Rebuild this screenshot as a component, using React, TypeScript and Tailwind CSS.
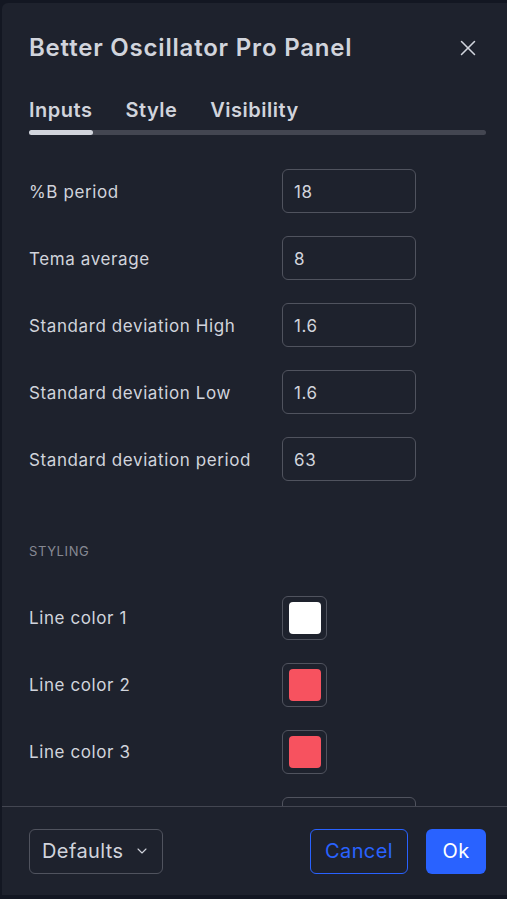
import { X, ChevronDown } from "lucide-react";

const inputs = [
  ["%B period", "18"],
  ["Tema average", "8"],
  ["Standard deviation High", "1.6"],
  ["Standard deviation Low", "1.6"],
  ["Standard deviation period", "63"],
];

const colors = [
  ["Line color 1", "bg-white"],
  ["Line color 2", "bg-[#f7525f]"],
  ["Line color 3", "bg-[#f7525f]"],
];

export default function App() {
  return (
    <div className="h-[899px] w-[507px] overflow-hidden bg-[#131722] pl-[2px] pt-[3px] font-['Inter','Noto_Sans',sans-serif] text-[#d1d4dc]">
      <div className="flex h-[892px] w-[520px] flex-col rounded-tl-md bg-[#1e222d]">
        <div className="flex h-[88px] items-center justify-between pl-[27px] pr-[41px] pt-[2px]">
          <h1 className="text-[24px] font-semibold tracking-[0.8px]">Better Oscillator Pro Panel</h1>
          <X className="h-[26px] w-[26px]" strokeWidth={1.4} />
        </div>

        <div className="pl-[27px] pr-[34px]">
          <div className="mt-[7px] flex gap-[33px] text-[20px] leading-[24px] font-semibold tracking-[0.5px]">
            <span>Inputs</span>
            <span>Style</span>
            <span>Visibility</span>
          </div>
          <div className="mt-[8px] h-[5px] w-[457px] rounded-full bg-[#434651]">
            <div className="h-[5px] w-[64px] rounded-full bg-[#d1d4dc]" />
          </div>
        </div>

        <div className="flex-1 overflow-hidden pl-[27px] pt-[34px]">
          <div className="flex flex-col gap-[23px]">
            {inputs.map(([label, value]) => (
              <div key={label} className="flex items-center">
                <span className="w-[253px] pt-[4px] text-[17px] tracking-[0.6px]">{label}</span>
                <div className="flex h-[44px] w-[134px] items-center rounded-md border border-[#50535e] px-[11px] pt-[3px] text-[17px] tracking-[0.6px]">
                  {value}
                </div>
              </div>
            ))}
          </div>

          <p className="mt-[61px] text-[13px] tracking-[0.6px] text-[#868993]">STYLING</p>

          <div className="mt-[34px] flex flex-col gap-[23px]">
            {colors.map(([label, swatch]) => (
              <div key={label} className="flex items-center">
                <span className="w-[253px] pt-[3px] text-[17px] tracking-[0.6px]">{label}</span>
                <div className="flex h-[44px] w-[45px] items-center justify-center rounded-md border border-[#50535e]">
                  <div className={`h-[32px] w-[32px] rounded-[4px] ${swatch}`} />
                </div>
              </div>
            ))}
            <div className="flex items-center">
              <span className="w-[253px]" />
              <div className="h-[44px] w-[134px] rounded-md border border-[#50535e]" />
            </div>
          </div>
        </div>

        <div className="flex h-[89px] items-center border-t border-[#434651] pl-[27px] pr-[36px]">
          <div className="flex h-[45px] w-[134px] items-center justify-between rounded-md border border-[#50535e] pl-[12px] pr-[12px] text-[20px] tracking-[0.4px]">
            <span>Defaults</span>
            <ChevronDown className="h-[16px] w-[16px]" strokeWidth={1.6} />
          </div>
          <div className="ml-auto flex h-[45px] w-[98px] items-center justify-center rounded-md border border-[#2962ff] text-[20px] tracking-[0.4px] text-[#2962ff]">
            Cancel
          </div>
          <div className="ml-[18px] flex h-[45px] w-[60px] items-center justify-center rounded-md bg-[#2962ff] text-[20px] tracking-[0.4px] text-white">
            Ok
          </div>
        </div>
      </div>
    </div>
  );
}
